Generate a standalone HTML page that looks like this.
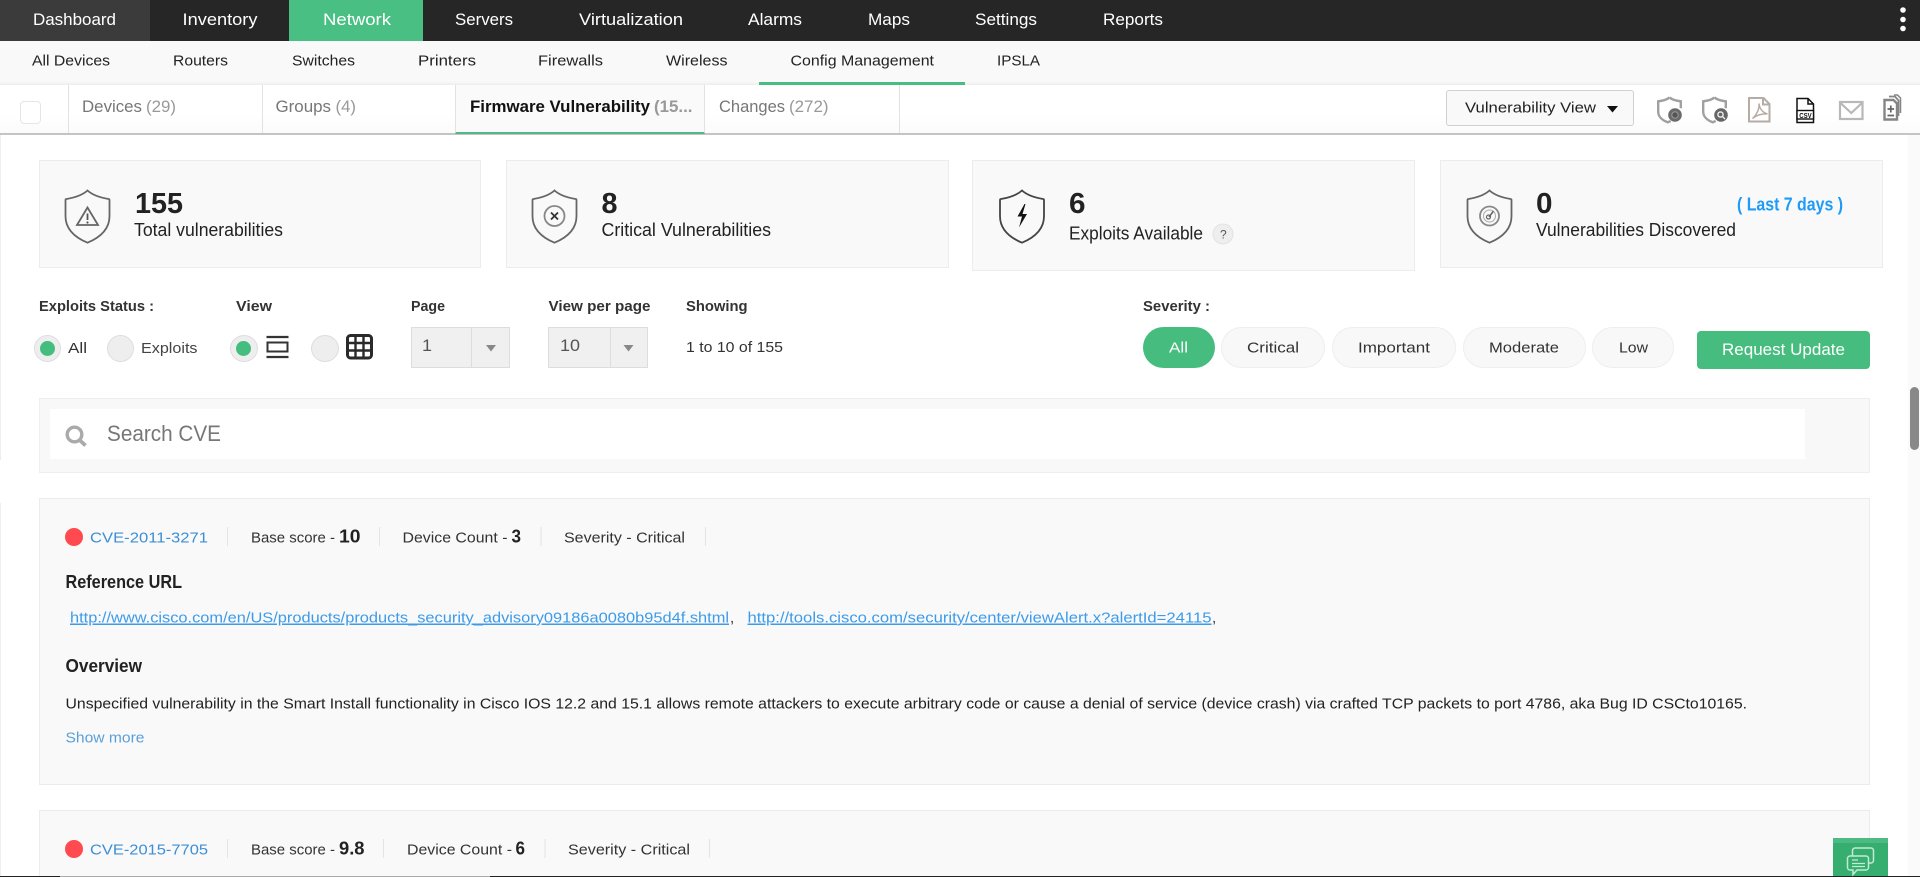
<!DOCTYPE html>
<html lang="en">
<head>
<meta charset="utf-8">
<title>Firmware Vulnerability</title>
<style>
html{margin:0;padding:0;background:#fff;width:1920px;height:877px;overflow:hidden}
body{margin:0;padding:0;position:relative;width:1920px;height:877px;overflow:hidden;background:#fff;font-family:"Liberation Sans",sans-serif}
.b{position:absolute;box-sizing:border-box}
.card{background:#f9f9f9;border:1px solid #ececec}
svg.layer{position:absolute;left:0;top:0;width:1920px;height:877px}
svg text{font-family:"Liberation Sans",sans-serif;fill:#222}
.n{font-size:17px;fill:#fff}
.s{font-size:15px;fill:#222}
.tab{font-size:17px;fill:#777}
.tabg{font-size:17px;fill:#999}
.big{font-size:29px;font-weight:700;fill:#222}
.lab{font-size:18px;fill:#222}
.h{font-size:14.5px;font-weight:700;fill:#333}
.r{font-size:15px;fill:#333}
.lnk{font-size:15px;fill:#3d8fd6}
.url{font-size:15px;fill:#3d9be9}
.num{font-size:18px;font-weight:700;fill:#222}
.hd{font-size:18px;font-weight:700;fill:#222}
</style>
</head>
<body>
<!-- top nav -->
<div class="b" style="left:0;top:0;width:1920px;height:41px;background:#262626"></div>
<div class="b" style="left:0;top:0;width:150px;height:41px;background:#3b3b3b"></div>
<div class="b" style="left:289px;top:0;width:134px;height:41px;background:#4abf84"></div>
<!-- sub nav -->
<div class="b" style="left:0;top:41px;width:1920px;height:44px;background:#f9f9f9;box-shadow:inset 0 -4px 4px -4px #ddd"></div>
<div class="b" style="left:759px;top:82px;width:206px;height:3px;background:#48bd80"></div>
<!-- tab bar -->
<div class="b" style="left:0;top:85px;width:1920px;height:50px;background:linear-gradient(#fff 60%,#fbfbfb);border-bottom:2px solid #c4c4c4"></div>
<div class="b" style="left:20px;top:101px;width:21px;height:23px;background:#fff;border:1px solid #e5e5e5;border-radius:4px"></div>
<div class="b" style="left:68px;top:85px;width:1px;height:48px;background:#e2e2e2"></div>
<div class="b" style="left:262px;top:85px;width:1px;height:48px;background:#e2e2e2"></div>
<div class="b" style="left:455px;top:85px;width:250px;height:49px;background:#fafafa;border-left:1px solid #e2e2e2;border-right:1px solid #e2e2e2;border-bottom:2px solid #4fb886"></div>
<div class="b" style="left:899px;top:85px;width:1px;height:48px;background:#e2e2e2"></div>
<div class="b" style="left:1446px;top:90px;width:188px;height:36px;background:#f9f9f9;border:1px solid #d0d0d0;border-radius:3px"></div>
<!-- left edge -->
<div class="b" style="left:0;top:135px;width:1px;height:325px;background:#eee"></div>
<div class="b" style="left:0;top:503px;width:1px;height:373px;background:#eee"></div>
<!-- cards -->
<div class="b card" style="left:39px;top:160px;width:442px;height:108px"></div>
<div class="b card" style="left:506px;top:160px;width:443px;height:108px"></div>
<div class="b card" style="left:972px;top:160px;width:443px;height:111px"></div>
<div class="b card" style="left:1440px;top:160px;width:443px;height:108px"></div>
<!-- radios -->
<div class="b" style="left:34px;top:335px;width:27px;height:27px;border-radius:50%;background:#eee;border:1px solid #ddd"></div>
<div class="b" style="left:40px;top:341px;width:15px;height:15px;border-radius:50%;background:#45bd7e"></div>
<div class="b" style="left:107px;top:335px;width:27px;height:27px;border-radius:50%;background:#eee;border:1px solid #ddd"></div>
<div class="b" style="left:230px;top:335px;width:28px;height:27px;border-radius:50%;background:#eee;border:1px solid #ddd"></div>
<div class="b" style="left:236px;top:341px;width:15px;height:15px;border-radius:50%;background:#45bd7e"></div>
<div class="b" style="left:311px;top:335px;width:28px;height:27px;border-radius:50%;background:#eee;border:1px solid #ddd"></div>
<!-- selects -->
<div class="b" style="left:411px;top:327px;width:99px;height:41px;background:#f0f0f0;border:1px solid #ddd"></div>
<div class="b" style="left:471px;top:327px;width:1px;height:41px;background:#ddd"></div>
<div class="b" style="left:548px;top:327px;width:100px;height:41px;background:#f0f0f0;border:1px solid #ddd"></div>
<div class="b" style="left:610px;top:327px;width:1px;height:41px;background:#ddd"></div>
<!-- pills -->
<div class="b" style="left:1143px;top:327px;width:72px;height:41px;border-radius:21px;background:#46bd7f"></div>
<div class="b" style="left:1221px;top:327px;width:104px;height:41px;border-radius:21px;background:#f8f8f8;border:1px solid #eee"></div>
<div class="b" style="left:1332px;top:327px;width:124px;height:41px;border-radius:21px;background:#f8f8f8;border:1px solid #eee"></div>
<div class="b" style="left:1463px;top:327px;width:123px;height:41px;border-radius:21px;background:#f8f8f8;border:1px solid #eee"></div>
<div class="b" style="left:1592px;top:327px;width:82px;height:41px;border-radius:21px;background:#f8f8f8;border:1px solid #eee"></div>
<div class="b" style="left:1697px;top:331px;width:173px;height:38px;border-radius:4px;background:#46bd7f"></div>
<!-- search -->
<div class="b" style="left:39px;top:398px;width:1831px;height:75px;background:#f8f8f8;border:1px solid #eee"></div>
<div class="b" style="left:50px;top:409px;width:1755px;height:50px;background:#fff"></div>
<!-- CVE cards -->
<div class="b card" style="left:39px;top:498px;width:1831px;height:287px"></div>
<div class="b card" style="left:39px;top:810px;width:1831px;height:67px;border-bottom:0"></div>
<!-- scrollbar -->
<div class="b" style="left:1908px;top:135px;width:12px;height:742px;background:#fafafa"></div>
<div class="b" style="left:1910px;top:387px;width:9px;height:63px;border-radius:5px;background:#888"></div>
<!-- chat -->
<div class="b" style="left:1833px;top:838px;width:55px;height:39px;background:#36ae6f;border-top:5px solid #4cba82"></div>
<!-- bottom edge -->
<div class="b" style="left:0;top:876px;width:1920px;height:1px;background:#222"></div>
<div class="b" style="left:60px;top:876px;width:430px;height:1px;background:#aaa"></div>

<svg class="layer" viewBox="0 0 1920 877" xmlns="http://www.w3.org/2000/svg">
<!-- top nav text -->
<text class="n" x="33" y="25" textLength="83" lengthAdjust="spacingAndGlyphs">Dashboard</text>
<text class="n" x="182.500" y="25" textLength="75" lengthAdjust="spacingAndGlyphs">Inventory</text>
<text class="n" x="323" y="25" textLength="68" lengthAdjust="spacingAndGlyphs">Network</text>
<text class="n" x="455" y="25" textLength="58" lengthAdjust="spacingAndGlyphs">Servers</text>
<text class="n" x="579" y="25" textLength="104" lengthAdjust="spacingAndGlyphs">Virtualization</text>
<text class="n" x="748" y="25" textLength="54" lengthAdjust="spacingAndGlyphs">Alarms</text>
<text class="n" x="868" y="25" textLength="42" lengthAdjust="spacingAndGlyphs">Maps</text>
<text class="n" x="975" y="25" textLength="62" lengthAdjust="spacingAndGlyphs">Settings</text>
<text class="n" x="1103" y="25" textLength="60" lengthAdjust="spacingAndGlyphs">Reports</text>
<circle cx="1903" cy="10" r="2.800" fill="#fff"/><circle cx="1903" cy="19.500" r="2.800" fill="#fff"/><circle cx="1903" cy="28.500" r="2.800" fill="#fff"/>
<!-- sub nav text -->
<text class="s" x="32" y="65.500" textLength="78" lengthAdjust="spacingAndGlyphs">All Devices</text>
<text class="s" x="173" y="65.500" textLength="55" lengthAdjust="spacingAndGlyphs">Routers</text>
<text class="s" x="292" y="65.500" textLength="63" lengthAdjust="spacingAndGlyphs">Switches</text>
<text class="s" x="418" y="65.500" textLength="58" lengthAdjust="spacingAndGlyphs">Printers</text>
<text class="s" x="538" y="65.500" textLength="65" lengthAdjust="spacingAndGlyphs">Firewalls</text>
<text class="s" x="666" y="65.500" textLength="61.500" lengthAdjust="spacingAndGlyphs">Wireless</text>
<text class="s" x="790.500" y="65.500" textLength="143.500" lengthAdjust="spacingAndGlyphs">Config Management</text>
<text class="s" x="997" y="65.500" textLength="43" lengthAdjust="spacingAndGlyphs">IPSLA</text>
<!-- tabs -->
<text class="tab" x="82" y="112" textLength="60" lengthAdjust="spacingAndGlyphs">Devices</text>
<text class="tabg" x="146" y="112" textLength="30" lengthAdjust="spacingAndGlyphs">(29)</text>
<text class="tab" x="275.500" y="112" textLength="55.500" lengthAdjust="spacingAndGlyphs">Groups</text>
<text class="tabg" x="335.500" y="112" textLength="20.500" lengthAdjust="spacingAndGlyphs">(4)</text>
<text x="470" y="112" font-size="17" font-weight="700" style="fill:#111" textLength="180" lengthAdjust="spacingAndGlyphs">Firmware Vulnerability</text>
<text class="tabg" x="654" y="112" style="font-weight:700" textLength="38.500" lengthAdjust="spacingAndGlyphs">(15...</text>
<text class="tab" x="719" y="112" textLength="66" lengthAdjust="spacingAndGlyphs">Changes</text>
<text class="tabg" x="789" y="112" textLength="39.500" lengthAdjust="spacingAndGlyphs">(272)</text>
<text x="1465" y="112.500" font-size="15" style="fill:#222" textLength="131" lengthAdjust="spacingAndGlyphs">Vulnerability View</text>
<path d="M1607 106h11l-5.500 6.500z" fill="#111"/>
<!-- toolbar icons -->
<g fill="none" stroke="#a0a0a0" stroke-width="2.400">
<path d="M1669.500 97.500c-2.800 2.200-6.500 3.300-11.300 3.800v10.500c0 4.800 4 8.500 9.500 10.500 1.200-.4 2-.8 3-1.300M1669.500 97.500c2.800 2.200 6.500 3.300 11.300 3.800v7"/>
<path d="M1714.500 97.500c-2.800 2.200-6.500 3.300-11.300 3.800v10.500c0 4.800 4 8.500 9.500 10.500 1.200-.4 2-.8 3-1.300M1714.500 97.500c2.800 2.200 6.500 3.300 11.300 3.800v7"/>
</g>
<circle cx="1675" cy="115" r="6.800" fill="#6a6a6a"/><circle cx="1675" cy="115" r="3.200" fill="#555" stroke="#999" stroke-width="1"/>
<circle cx="1721" cy="115" r="6.800" fill="#666"/><circle cx="1720.500" cy="114.500" r="2.600" fill="none" stroke="#eee" stroke-width="1.400"/><path d="M1722.500 116.500l2.500 2.500" stroke="#eee" stroke-width="1.300"/>
<g fill="none" stroke="#b5aca6" stroke-width="2">
<path d="M1749 98h14.500l6 6v17.500h-20.500zM1763 98v6.500h6.500"/>
<path d="M1752.500 118.500c4.500-4 7-10 6.500-15 .5 5 3.500 9 8.500 10.500-5-.5-11 1-15 4.500z" stroke-width="1.500"/>
</g>
<path d="M1797 98.500h11l5.500 5.500v18.500h-16.500zM1808 98.500v5.500h5.500" fill="#fff" stroke="#111" stroke-width="1.500"/>
<rect x="1797" y="110.500" width="16.500" height="8.500" fill="#fff" stroke="#111" stroke-width="1.400"/>
<text x="1799.200" y="117.800" font-size="7.500" font-weight="700" style="fill:#111" textLength="12.500" lengthAdjust="spacingAndGlyphs">CSV</text>
<g fill="none" stroke="#b8b8b8" stroke-width="2.200">
<rect x="1840" y="102" width="22.500" height="17"/>
<path d="M1840 102.500l11.250 10.500 11.250-10.500"/>
</g>
<g fill="none" stroke="#858585" stroke-width="2.400">
<path d="M1884.500 100h9l3.500 3.500v16h-12.500z" fill="#fff"/>
<path d="M1889 96.500h6l3.500 4v15.500" stroke-width="1.800"/>
<path d="M1894 95h3.500l3 3v15" stroke-width="1.500"/>
<path d="M1890.800 105.500v7M1887.500 109h6.600M1887.500 115.500h6.600" stroke-width="1.700" stroke="#666"/>
</g>
<!-- shields -->
<g fill="none" stroke="#666" stroke-width="1.800">
<path d="M87.500 190.500c-5 4.500-12 7-21 8.500-.8 0-1 .5-1 1.200v16c0 13 9 21 22 26.500 13-5.500 22-13.500 22-26.500v-16c0-.7-.2-1.200-1-1.200-9-1.500-16-4-21-8.500z"/>
<path d="M554.500 190.500c-5 4.500-12 7-21 8.500-.8 0-1 .5-1 1.200v16c0 13 9 21 22 26.500 13-5.500 22-13.500 22-26.500v-16c0-.7-.2-1.200-1-1.200-9-1.500-16-4-21-8.500z"/>
<path d="M1022 190.500c-5 4.500-12 7-21 8.500-.8 0-1 .5-1 1.200v16c0 13 9 21 22 26.500 13-5.500 22-13.500 22-26.500v-16c0-.7-.2-1.200-1-1.200-9-1.500-16-4-21-8.500z" stroke="#444"/>
<path d="M1489.500 190.500c-5 4.500-12 7-21 8.500-.8 0-1 .5-1 1.200v16c0 13 9 21 22 26.500 13-5.500 22-13.500 22-26.500v-16c0-.7-.2-1.200-1-1.200-9-1.500-16-4-21-8.500z"/>
<path d="M87.500 207.500l-10.500 17.500h21z" stroke="#666"/>
<circle cx="554.500" cy="216" r="10" stroke="#888"/>
<circle cx="1489.500" cy="216" r="9.500" stroke="#888"/>
<circle cx="1489.500" cy="216" r="6" stroke="#aaa" stroke-width="1"/>
</g>
<path d="M87.500 213.500v6.500" stroke="#555" stroke-width="1.800"/><circle cx="87.500" cy="222.500" r="1.100" fill="#555"/>
<path d="M551 212.500l7 7M558 212.500l-7 7" stroke="#333" stroke-width="1.800"/>
<path d="M1024.500 204l-7 12.500h4.500l-3 11 8-13.500h-4.500l3-10z" fill="#111"/>
<path d="M1489 217l4.500-6" stroke="#666" stroke-width="1.600"/><circle cx="1488.500" cy="217" r="2" fill="none" stroke="#666" stroke-width="1.200"/>
<!-- card text -->
<text class="big" x="135" y="213" textLength="48" lengthAdjust="spacingAndGlyphs">155</text>
<text class="lab" x="134" y="236" textLength="149" lengthAdjust="spacingAndGlyphs">Total vulnerabilities</text>
<text class="big" x="601.500" y="213" textLength="16" lengthAdjust="spacingAndGlyphs">8</text>
<text class="lab" x="601.500" y="236" textLength="169.500" lengthAdjust="spacingAndGlyphs">Critical Vulnerabilities</text>
<text class="big" x="1069" y="213" textLength="16.500" lengthAdjust="spacingAndGlyphs">6</text>
<text class="lab" x="1069" y="239.500" textLength="134" lengthAdjust="spacingAndGlyphs">Exploits Available</text>
<circle cx="1223" cy="234" r="10" fill="#eee" stroke="#e2e2e2"/>
<text x="1220" y="238.500" font-size="12" style="fill:#555">?</text>
<text class="big" x="1536" y="213" textLength="16.500" lengthAdjust="spacingAndGlyphs">0</text>
<text class="lab" x="1536" y="236" textLength="200" lengthAdjust="spacingAndGlyphs">Vulnerabilities Discovered</text>
<text x="1737" y="210.500" font-size="18" font-weight="700" style="fill:#1e9bf7" textLength="106" lengthAdjust="spacingAndGlyphs">( Last 7 days )</text>
<!-- filter labels -->
<text class="h" x="39" y="311" textLength="115" lengthAdjust="spacingAndGlyphs">Exploits Status :</text>
<text class="h" x="236" y="311" textLength="36" lengthAdjust="spacingAndGlyphs">View</text>
<text class="h" x="411" y="311" textLength="34" lengthAdjust="spacingAndGlyphs">Page</text>
<text class="h" x="548.500" y="311" textLength="102" lengthAdjust="spacingAndGlyphs">View per page</text>
<text class="h" x="686" y="311" textLength="61.500" lengthAdjust="spacingAndGlyphs">Showing</text>
<text class="h" x="1143" y="311" textLength="67" lengthAdjust="spacingAndGlyphs">Severity :</text>
<text class="r" x="68" y="353" textLength="19" lengthAdjust="spacingAndGlyphs">All</text>
<text class="r" x="141" y="353" style="fill:#444" textLength="56.500" lengthAdjust="spacingAndGlyphs">Exploits</text>
<!-- view icons -->
<path d="M266.500 337h22M266.500 357h22" stroke="#333" stroke-width="2.200"/>
<rect x="267.500" y="342.500" width="20" height="9" fill="none" stroke="#333" stroke-width="2"/>
<rect x="347.500" y="335.500" width="24" height="22.500" rx="3" fill="none" stroke="#2a2a2a" stroke-width="3"/>
<path d="M355.500 335v23M363.500 335v23M347 343h25M347 350.500h25" stroke="#2a2a2a" stroke-width="2.400"/>
<!-- selects text -->
<text x="422" y="351" font-size="17" style="fill:#555" textLength="10" lengthAdjust="spacingAndGlyphs">1</text>
<text x="560" y="351" font-size="17" style="fill:#555" textLength="20" lengthAdjust="spacingAndGlyphs">10</text>
<path d="M486 345h10l-5 6.500z" fill="#888"/><path d="M623.500 345h10l-5 6.500z" fill="#888"/>
<text class="r" x="686" y="352" textLength="97" lengthAdjust="spacingAndGlyphs">1 to 10 of 155</text>
<!-- pills text -->
<text class="r" x="1169" y="352.500" style="fill:#fff" textLength="19" lengthAdjust="spacingAndGlyphs">All</text>
<text class="r" x="1247" y="352.500" textLength="52" lengthAdjust="spacingAndGlyphs">Critical</text>
<text class="r" x="1358" y="352.500" textLength="72" lengthAdjust="spacingAndGlyphs">Important</text>
<text class="r" x="1489" y="352.500" textLength="70" lengthAdjust="spacingAndGlyphs">Moderate</text>
<text class="r" x="1619" y="352.500" textLength="29" lengthAdjust="spacingAndGlyphs">Low</text>
<text x="1722" y="355" font-size="17" style="fill:#fff" textLength="123" lengthAdjust="spacingAndGlyphs">Request Update</text>
<!-- search -->
<circle cx="74.500" cy="434.500" r="7.300" fill="none" stroke="#aaa" stroke-width="3.400"/>
<path d="M79.500 440l6 5.500" stroke="#aaa" stroke-width="3.800"/>
<text x="107" y="441" font-size="22" style="fill:#777" textLength="114" lengthAdjust="spacingAndGlyphs">Search CVE</text>
<!-- CVE 1 -->
<circle cx="74" cy="537" r="9" fill="#ff4a4f"/>
<text class="lnk" x="90" y="542.500" textLength="118" lengthAdjust="spacingAndGlyphs">CVE-2011-3271</text>
<text class="r" x="251" y="542.500" textLength="84" lengthAdjust="spacingAndGlyphs">Base score -</text>
<text class="num" x="339" y="542.500" textLength="21.500" lengthAdjust="spacingAndGlyphs">10</text>
<text class="r" x="402.500" y="542.500" textLength="105" lengthAdjust="spacingAndGlyphs">Device Count -</text>
<text class="num" x="511.500" y="542.500" textLength="9.500" lengthAdjust="spacingAndGlyphs">3</text>
<text class="r" x="564" y="542.500" textLength="121" lengthAdjust="spacingAndGlyphs">Severity - Critical</text>
<path d="M227.500 527v19M379.500 527v19M541 527v19M705.500 527v19" stroke="#e4e4e4" stroke-width="1"/>
<text class="hd" x="65.500" y="588" textLength="116.500" lengthAdjust="spacingAndGlyphs">Reference URL</text>
<text class="url" x="70" y="622.500" text-decoration="underline" textLength="659" lengthAdjust="spacingAndGlyphs">http://www.cisco.com/en/US/products/products_security_advisory09186a0080b95d4f.shtml</text>
<text class="r" x="730" y="622.500">,</text>
<text class="url" x="747.500" y="622.500" text-decoration="underline" textLength="464" lengthAdjust="spacingAndGlyphs">http://tools.cisco.com/security/center/viewAlert.x?alertId=24115</text>
<text class="r" x="1212" y="622.500">,</text>
<text class="hd" x="65.500" y="672" textLength="76.500" lengthAdjust="spacingAndGlyphs">Overview</text>
<text class="r" x="65.500" y="708.500" style="fill:#222" textLength="1681.500" lengthAdjust="spacingAndGlyphs">Unspecified vulnerability in the Smart Install functionality in Cisco IOS 12.2 and 15.1 allows remote attackers to execute arbitrary code or cause a denial of service (device crash) via crafted TCP packets to port 4786, aka Bug ID CSCto10165.</text>
<text class="lnk" x="65.500" y="742.500" style="fill:#5a9fd8" textLength="79" lengthAdjust="spacingAndGlyphs">Show more</text>
<!-- CVE 2 -->
<circle cx="74" cy="849" r="9" fill="#ff4a4f"/>
<text class="lnk" x="90" y="854.500" textLength="118" lengthAdjust="spacingAndGlyphs">CVE-2015-7705</text>
<text class="r" x="251" y="854.500" textLength="84" lengthAdjust="spacingAndGlyphs">Base score -</text>
<text class="num" x="339" y="854.500" textLength="25.500" lengthAdjust="spacingAndGlyphs">9.8</text>
<text class="r" x="407" y="854.500" textLength="105" lengthAdjust="spacingAndGlyphs">Device Count -</text>
<text class="num" x="515.500" y="854.500" textLength="9.500" lengthAdjust="spacingAndGlyphs">6</text>
<text class="r" x="568" y="854.500" textLength="122" lengthAdjust="spacingAndGlyphs">Severity - Critical</text>
<path d="M227.500 839v19M383.500 839v19M545 839v19M709.500 839v19" stroke="#e4e4e4" stroke-width="1"/>
<!-- chat icon -->
<g fill="#36ae6f" stroke="#c4ead6" stroke-width="1.500">
<path d="M1855 848h16a2.500 2.500 0 0 1 2.500 2.500v10a2.500 2.500 0 0 1-2.500 2.500h-16a2.500 2.500 0 0 1-2.500-2.500v-10a2.500 2.500 0 0 1 2.500-2.500z"/>
<path d="M1850 856h16a2.500 2.500 0 0 1 2.500 2.500v9a2.500 2.500 0 0 1-2.500 2.500h-9l-4 4.500v-4.500h-3a2.500 2.500 0 0 1-2.500-2.500v-9a2.500 2.500 0 0 1 2.500-2.500z"/>
<path d="M1852 860h6M1852 863.500h13M1852 866.500h13" stroke-width="1.200"/>
</g>
</svg>
</body>
</html>
